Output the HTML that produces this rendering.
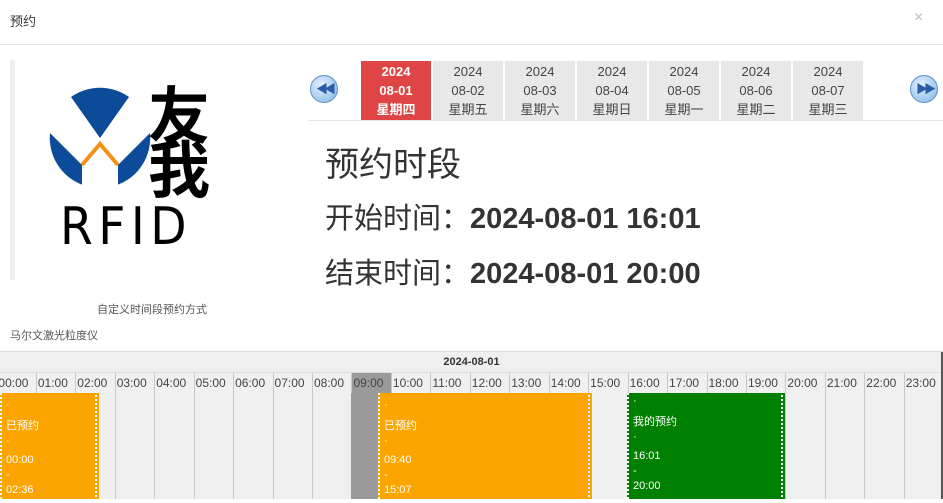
<!DOCTYPE html>
<html><head><meta charset="utf-8"><style>
*{margin:0;padding:0;box-sizing:border-box}
body{width:943px;height:503px;overflow:hidden;background:#fff;font-family:"Liberation Sans","Noto Sans CJK SC",sans-serif;position:relative;color:#333}
.abs{position:absolute}
.day{position:absolute;top:61px;width:70px;height:59px;background:#e8e8e8;text-align:center;font-size:13px;line-height:19px;color:#444;padding-top:1px}
.day.on{background:#e04545;color:#fff;font-weight:bold}
.hr{position:absolute;top:373px;height:20px;border-left:1px solid #c8c8c8;font-size:12px;line-height:20px;color:#444;padding-left:1px;background:#f0f0f0}
.col{position:absolute;top:393px;height:106px;border-left:1px solid #c8c8c8}
.blk{position:absolute;top:393px;height:106px;color:#fff;font-size:11px;line-height:15px;padding-left:4px;border-left:2px dotted #fff}
.blk .r{position:absolute;right:2px;top:2px;bottom:2px;border-left:2px dotted #fff}
.btn{position:absolute;top:75px;width:28px;height:28px;border-radius:50%;background:radial-gradient(circle at 40% 35%,#e6f2ff,#7fb3e8);border:1px solid #5b8fc8;color:#2a5ca8;font-size:12px;line-height:26px;text-align:center;letter-spacing:-4px}
</style></head><body>
<div class="abs" style="left:10px;top:11px;font-size:13px;color:#333">预约</div>
<div class="abs" style="left:914px;top:9px;font-size:16px;color:#bbb">×</div>
<div class="abs" style="left:0;top:44px;width:943px;height:1px;background:#e5e5e5"></div>

<div class="abs" style="left:10px;top:60px;width:5px;height:220px;background:#eee"></div>
<svg class="abs" style="left:0;top:0" width="240" height="260" viewBox="0 0 240 260">
<path d="M100 138 L71 97 A50 50 0 0 1 129 97 Z" fill="#0c4a9a"/>
<path d="M50 133 A50 50 0 0 0 82 184.6 L82 165 Z" fill="#0c4a9a"/>
<path d="M150 133 A50 50 0 0 1 118 184.6 L118 165 Z" fill="#0c4a9a"/>
<path d="M82 165 L100 144 L118 165" fill="none" stroke="#f39019" stroke-width="4"/>
<text x="148" y="138" font-size="62" font-weight="bold" font-family="Noto Sans CJK SC" fill="#000">友</text>
<text x="148" y="192" font-size="62" font-weight="bold" font-family="Noto Sans CJK SC" fill="#000">我</text>
<text x="60" y="244" font-size="52" font-family="DejaVu Sans" fill="#000" letter-spacing="6" textLength="132" lengthAdjust="spacingAndGlyphs">RFID</text>
</svg>
<div class="abs" style="left:97px;top:301px;font-size:11px;color:#555">自定义时间段预约方式</div>
<div class="abs" style="left:10px;top:327px;font-size:11px;color:#555">马尔文激光粒度仪</div>

<div class="btn" style="left:310px">◀◀</div>
<div class="btn" style="left:910px">▶▶</div>
<div class="day on" style="left:361px">2024<br>08-01<br>星期四</div>
<div class="day" style="left:433px">2024<br>08-02<br>星期五</div>
<div class="day" style="left:505px">2024<br>08-03<br>星期六</div>
<div class="day" style="left:577px">2024<br>08-04<br>星期日</div>
<div class="day" style="left:649px">2024<br>08-05<br>星期一</div>
<div class="day" style="left:721px">2024<br>08-06<br>星期二</div>
<div class="day" style="left:793px">2024<br>08-07<br>星期三</div>
<div class="abs" style="left:308px;top:120px;width:635px;height:1px;background:#e5e5e5"></div>

<div class="abs" style="left:325px;top:137px;font-size:34px;color:#333">预约时段</div>
<div class="abs" style="left:325px;top:195px;font-size:29px;color:#333">开始时间：<b>2024-08-01 16:01</b></div>
<div class="abs" style="left:325px;top:250px;font-size:29px;color:#333">结束时间：<b>2024-08-01 20:00</b></div>

<div class="abs" style="left:0;top:351px;width:943px;height:152px;background:#efefef;border-top:1px solid #ddd"></div>
<div class="abs" style="left:0;top:352px;width:943px;height:21px;font-size:11px;font-weight:bold;text-align:center;line-height:20px;color:#333;border-bottom:1px solid #ddd">2024-08-01</div>
<div class="abs" style="left:351px;top:373px;width:40px;height:126px;background:#9a9a9a"></div>
<div id="g"></div>
<div class="abs" style="left:0;top:499px;width:943px;height:4px;background:#fff"></div>
<div class="abs" style="left:941px;top:352px;width:2px;height:147px;background:#555"></div>
<script>
var g=document.getElementById('g'),h='';
for(var i=0;i<24;i++){var x=-3.6+i*39.45;
h+='<div class="hr" style="left:'+x+'px;width:39.45px;'+(i==9?'background:#9a9a9a;':'')+'">'+(i<10?'0':'')+i+':00</div>';
if(i!=9)h+='<div class="col" style="left:'+x+'px"></div>';}
function b(l,r,c,t,s,e,p){h+='<div class="blk" style="left:'+l+'px;width:'+(r-l)+'px;background:'+c+'"><div class="r"></div><div style="padding-top:'+p+'px">·</div><div style="margin-top:6px">'+t+'</div>·<div style="margin-top:4px">'+s+'</div>-<div>'+e+'</div></div>';}
b(0,99,'#fca500','已预约','00:00','02:36',5);
b(378,592,'#fca500','已预约','09:40','15:07',5);
b(627,785,'#008000','我的预约','16:01','20:00',1);
g.innerHTML=h;
</script>
</body></html>
